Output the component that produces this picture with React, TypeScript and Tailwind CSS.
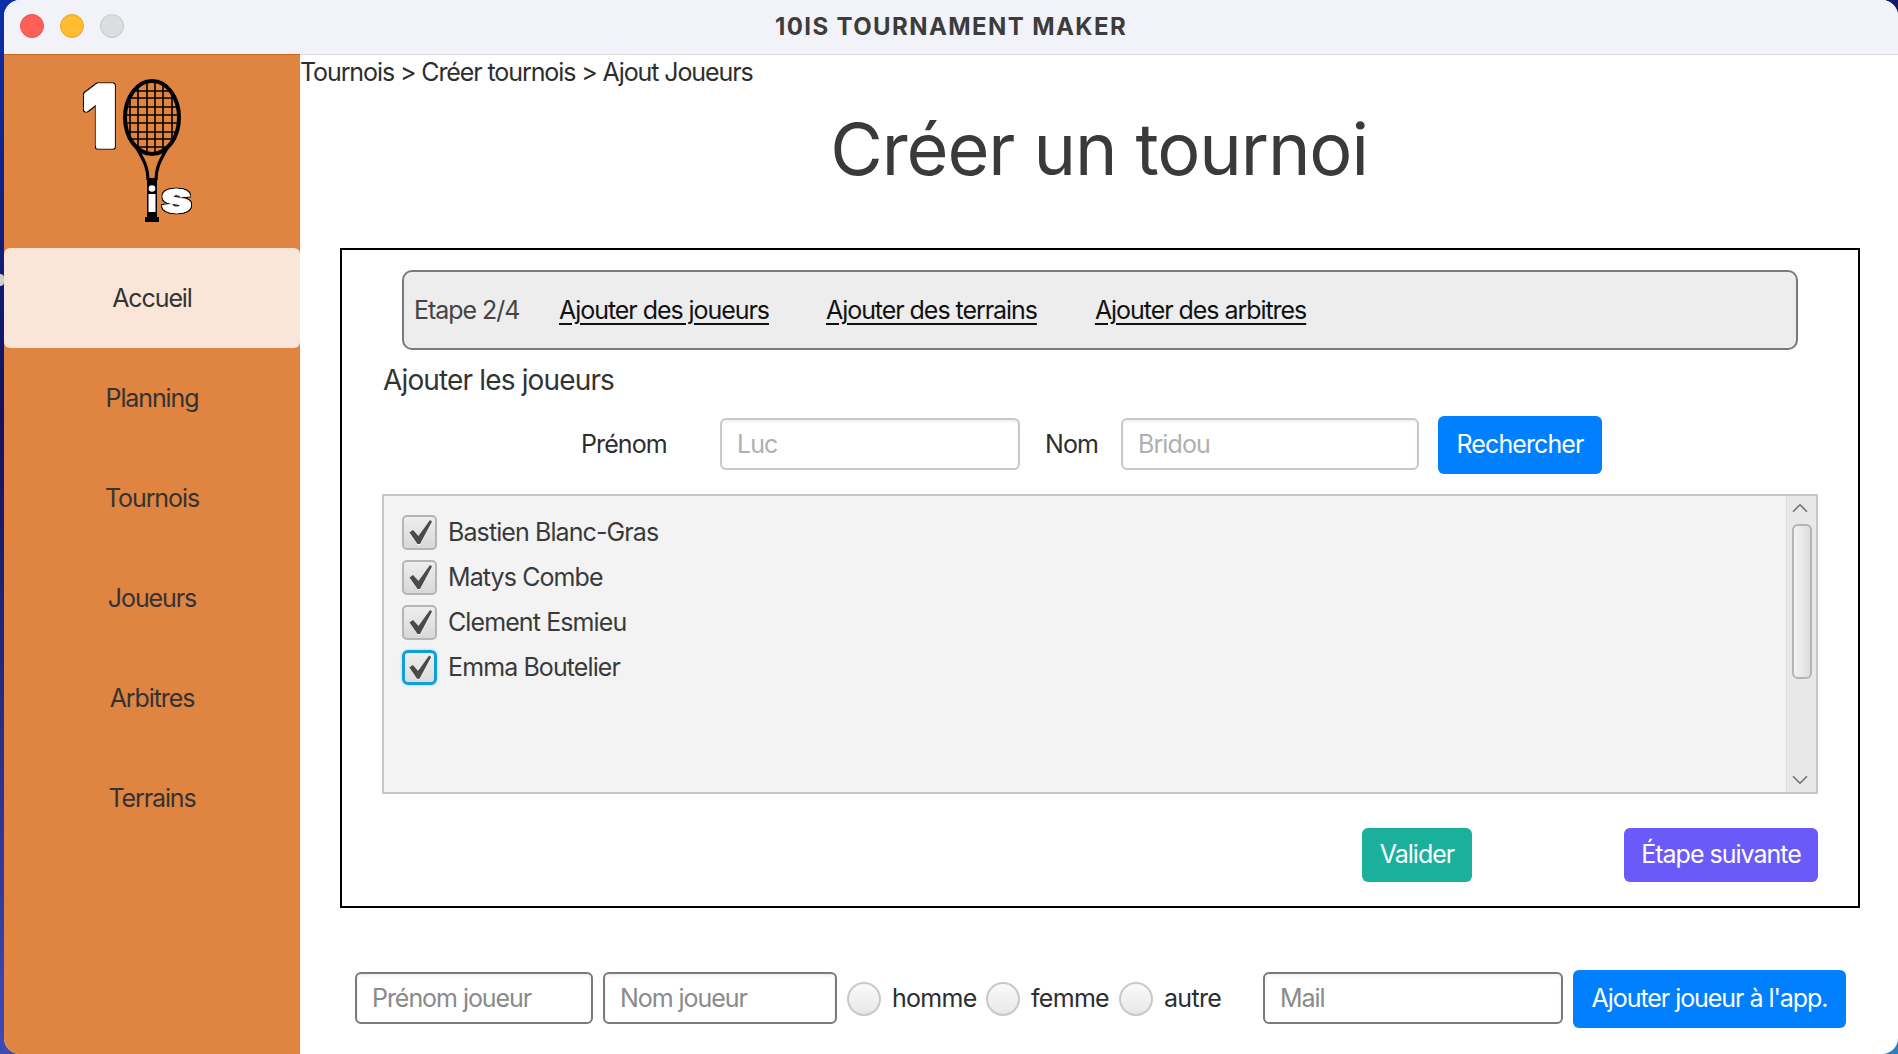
import { ChevronDown, ChevronUp } from "lucide-react";

const navItems = ["Accueil", "Planning", "Tournois", "Joueurs", "Arbitres", "Terrains"];
const players = ["Bastien Blanc-Gras", "Matys Combe", "Clement Esmieu", "Emma Boutelier"];

function Logo() {
  return (
    <svg viewBox="72 55 160 175" className="w-[160px] h-[175px]">
      <defs>
        <clipPath id="head">
          <ellipse cx="152" cy="117.5" rx="27" ry="36.5" />
        </clipPath>
        {/* dark outline round the white letters */}
        <filter id="outline" x="-20%" y="-20%" width="140%" height="140%">
          <feMorphology in="SourceAlpha" operator="dilate" radius="0.8" result="edge" />
          <feMerge>
            <feMergeNode in="edge" />
            <feMergeNode in="SourceGraphic" />
          </feMerge>
        </filter>
      </defs>
      {/* the 1 */}
      <text
        x="83"
        y="145.5"
        fontFamily="Inter, sans-serif"
        fontWeight="900"
        fontSize="82"
        fill="#fff"
        stroke="#fff"
        strokeWidth="5"
        strokeLinejoin="round"
        textLength="33"
        lengthAdjust="spacingAndGlyphs"
        filter="url(#outline)"
      >
        1
      </text>
      {/* racket head */}
      <path
        d="M130 80V155M138 80V155M147 80V155M155 80V155M163 80V155M172 80V155M120 91H184M120 98H184M120 107H184M120 115H184M120 123H184M120 132H184M120 139H184M120 147H184"
        stroke="#000"
        strokeWidth="1.6"
        fill="none"
        clipPath="url(#head)"
      />
      <ellipse cx="152" cy="117.5" rx="27" ry="36.5" fill="none" stroke="#000" strokeWidth="4" />
      {/* throat */}
      <path d="M137 148C143 160 148 166 148 180M167 148C161 160 156 166 156 180" stroke="#000" strokeWidth="3.2" fill="none" />
      <path d="M147 178H157V218H147Z" fill="#000" />
      <rect x="148.5" y="194" width="7" height="18" fill="#fff" />
      <circle cx="152" cy="188.5" r="3.3" fill="#fff" />
      <path d="M145 217H159V222H145Z" fill="#000" />
      {/* the s */}
      <text
        x="161"
        y="212.5"
        fontFamily="Inter, sans-serif"
        fontWeight="900"
        fontSize="44"
        fill="#fff"
        stroke="#fff"
        strokeWidth="0.6"
        textLength="31"
        lengthAdjust="spacingAndGlyphs"
        filter="url(#outline)"
      >
        s
      </text>
    </svg>
  );
}

function Tick() {
  return (
    <svg viewBox="0 0 30 30" className="w-[30px] h-[30px]">
      <path d="M4.5 14.5L8 12L13.5 18L25 2L27 3.5L15 26H12.5Z" fill="#fff" opacity="0.7" transform="translate(0 1)" />
      <path d="M4.5 14.5L8 12L13.5 18L25 2L27 3.5L15 26H12.5Z" fill="#4a4a4a" />
    </svg>
  );
}

function PlayerCheck({ name, focused }: { name: string; focused?: boolean }) {
  return (
    <div className="flex items-center h-[45px]">
      <div
        className={
          focused
            ? "w-[35px] h-[35px] rounded-[6px] border-[3px] border-[#0f9ed5] shadow-[0_0_3px_#8fd3ee] bg-gradient-to-b from-[#eeeeee] to-[#dcdcdc] flex items-center justify-center"
            : "w-[35px] h-[35px] rounded-[5px] border-2 border-[#b5b5b5] bg-gradient-to-b from-[#eeeeee] to-[#d8d8d8] flex items-center justify-center"
        }
      >
        <Tick />
      </div>
      <span className="ml-[11px] text-[25px] tracking-[-0.9px] text-[#3a3a3a]">{name}</span>
    </div>
  );
}

function Radio({ label, labelWidth }: { label: string; labelWidth: string }) {
  return (
    <div className="flex items-center">
      <div className="w-[34px] h-[34px] rounded-full border-2 border-[#c8c8c8] bg-gradient-to-b from-[#fafafa] to-[#e8e8e8]" />
      <span className={`ml-[11px] text-[25px] tracking-[-0.7px] text-[#2e2e2e] ${labelWidth}`}>{label}</span>
    </div>
  );
}

export default function App() {
  return (
    <div className="relative w-[1898px] h-[1054px] overflow-hidden pl-[4px] bg-[linear-gradient(170deg,#0b2fa8_0%,#14125a_30%,#3f4ab5_76%,#2f7fc0_100%)] font-['Inter','Liberation_Sans',sans-serif]">
      <div className="absolute left-0 top-[274px] w-[4px] h-[12px] rounded-r-full bg-[#cfcfcf]" />
      <div className="w-[1894px] h-[1054px] rounded-[16px] overflow-hidden bg-white flex flex-col">
        {/* Title bar */}
        <div className="relative h-[54px] shrink-0 bg-[#f2f3f9] flex items-center justify-center">
          <div className="absolute left-[16px] top-[14px] flex gap-[16px]">
            <div className="w-[24px] h-[24px] rounded-full bg-[#ff5f57] border border-[#e5544d]" />
            <div className="w-[24px] h-[24px] rounded-full bg-[#febc2e] border border-[#e2a72a]" />
            <div className="w-[24px] h-[24px] rounded-full bg-[#dcdde1] border border-[#c6c7cb]" />
          </div>
          <span className="text-[24px] font-bold tracking-[1.4px] text-[#3c3c3c]">10IS TOURNAMENT MAKER</span>
        </div>

        <div className="flex flex-1">
          {/* Sidebar */}
          <div className="w-[296px] shrink-0 bg-[#e08442] border-t border-[#c4691f] flex flex-col">
            <div className="h-[193px] flex justify-center items-start">
              <Logo />
            </div>
            {navItems.map((item, i) => (
              <div
                key={item}
                className={
                  i === 0
                    ? "h-[100px] pt-[2px] rounded-[6px] bg-[#fae6d9] flex items-center justify-center text-[25px] tracking-[-1.1px] text-[#333333]"
                    : "h-[100px] pt-[2px] flex items-center justify-center text-[25px] tracking-[-1.1px] text-[#333333]"
                }
              >
                {item}
              </div>
            ))}
          </div>

          {/* Main */}
          <div className="flex-1 border-t border-[#dcdcdc] flex flex-col">
            <div className="pt-[3px] h-[31px] leading-[28px] text-[25px] tracking-[-1.1px] text-[#2e2e2e]">
              Tournois &gt; Créer tournois &gt; Ajout Joueurs
            </div>
            <div className="mt-[21px] h-[84px] leading-[84px] text-center text-[72px] tracking-[-1.1px] text-[#3a3a3a]">
              Créer un tournoi
            </div>

            {/* Wizard box */}
            <div className="mt-[57px] ml-[40px] w-[1520px] h-[660px] border-2 border-black flex flex-col">
              <div className="mt-[20px] ml-[60px] w-[1396px] h-[80px] pt-[2px] rounded-[10px] border-2 border-[#7a7a7a] bg-[#ededed] flex items-center pl-[10px] text-[25px] tracking-[-1.05px]">
                <span className="text-[#444444] w-[145px]">Etape 2/4</span>
                <span className="underline underline-offset-[4px] text-[#111111]">Ajouter des joueurs</span>
                <span className="underline underline-offset-[4px] text-[#111111] ml-[57px]">Ajouter des terrains</span>
                <span className="underline underline-offset-[4px] text-[#111111] ml-[58px]">Ajouter des arbitres</span>
              </div>

              <div className="mt-[13px] ml-[41px] h-[34px] leading-[34px] text-[28px] tracking-[-0.85px] text-[#333333]">
                Ajouter les joueurs
              </div>

              <div className="mt-[19px] h-[58px] flex items-center text-[25px] tracking-[-0.9px] text-[#2e2e2e]">
                <span className="ml-[239px] w-[139px]">Prénom</span>
                <div className="w-[300px] h-[52px] mb-[2px] pt-[2px] rounded-[6px] border-2 border-[#c8c8c8] shadow-[inset_0_2px_3px_rgba(0,0,0,0.06)] pl-[15px] flex items-center text-[#b0b0b0]">Luc</div>
                <span className="ml-[25px] w-[76px]">Nom</span>
                <div className="w-[298px] h-[52px] mb-[2px] pt-[2px] rounded-[6px] border-2 border-[#c8c8c8] shadow-[inset_0_2px_3px_rgba(0,0,0,0.06)] pl-[15px] flex items-center text-[#b0b0b0]">Bridou</div>
                <div className="ml-[19px] w-[164px] h-[58px] rounded-[6px] bg-[#0080ff] text-white flex items-center justify-center">Rechercher</div>
              </div>

              {/* Player list */}
              <div className="mt-[20px] ml-[40px] w-[1436px] h-[300px] border-2 border-[#c6c6c6] bg-[#f3f3f3] flex">
                <div className="flex-1 pl-[18px] pt-[14px]">
                  {players.map((p, i) => (
                    <PlayerCheck key={p} name={p} focused={i === 3} />
                  ))}
                </div>
                <div className="w-[30px] border-l border-[#dcdcdc] bg-[#e8e8e8] flex flex-col items-center pr-[4px]">
                  <ChevronUp className="w-[26px] h-[26px] -mt-[1px] text-[#777777]" strokeWidth={1.6} />
                  <div className="mt-[3px] ml-[4px] w-[20px] h-[155px] rounded-[6px] border-2 border-[#b4b4b4] bg-gradient-to-r from-[#f2f2f2] to-[#dedede]" />
                  <ChevronDown className="w-[26px] h-[26px] mt-auto -mb-[1px] text-[#777777]" strokeWidth={1.6} />
                </div>
              </div>

              <div className="mt-[34px] flex text-[25px] tracking-[-1px] text-white">
                <div className="ml-[1020px] w-[110px] h-[54px] rounded-[6px] bg-[#1ab09c] flex items-center justify-center">Valider</div>
                <div className="ml-[152px] w-[194px] h-[54px] rounded-[6px] bg-[#6a5af9] flex items-center justify-center">Étape suivante</div>
              </div>
            </div>

            {/* Add player row */}
            <div className="mt-[62px] pl-[55px] flex items-center text-[25px] tracking-[-1.05px]">
              <div className="w-[238px] h-[52px] mb-[2px] pt-[2px] rounded-[6px] border-2 border-[#7a7a7a] shadow-[inset_0_2px_3px_rgba(0,0,0,0.06)] pl-[15px] flex items-center text-[#8a8a8a]">Prénom joueur</div>
              <div className="ml-[10px] w-[234px] h-[52px] mb-[2px] pt-[2px] rounded-[6px] border-2 border-[#7a7a7a] shadow-[inset_0_2px_3px_rgba(0,0,0,0.06)] pl-[15px] flex items-center text-[#8a8a8a]">Nom joueur</div>
              <div className="ml-[10px] flex items-center">
                <Radio label="homme" labelWidth="w-[94px]" />
                <Radio label="femme" labelWidth="w-[88px]" />
                <Radio label="autre" labelWidth="w-[99px]" />
              </div>
              <div className="w-[300px] h-[52px] mb-[2px] pt-[2px] rounded-[6px] border-2 border-[#7a7a7a] shadow-[inset_0_2px_3px_rgba(0,0,0,0.06)] pl-[15px] flex items-center text-[#8a8a8a]">Mail</div>
              <div className="ml-[10px] w-[273px] h-[58px] rounded-[6px] bg-[#0080ff] text-white flex items-center justify-center">Ajouter joueur à l'app.</div>
            </div>
          </div>
        </div>
      </div>
    </div>
  );
}
